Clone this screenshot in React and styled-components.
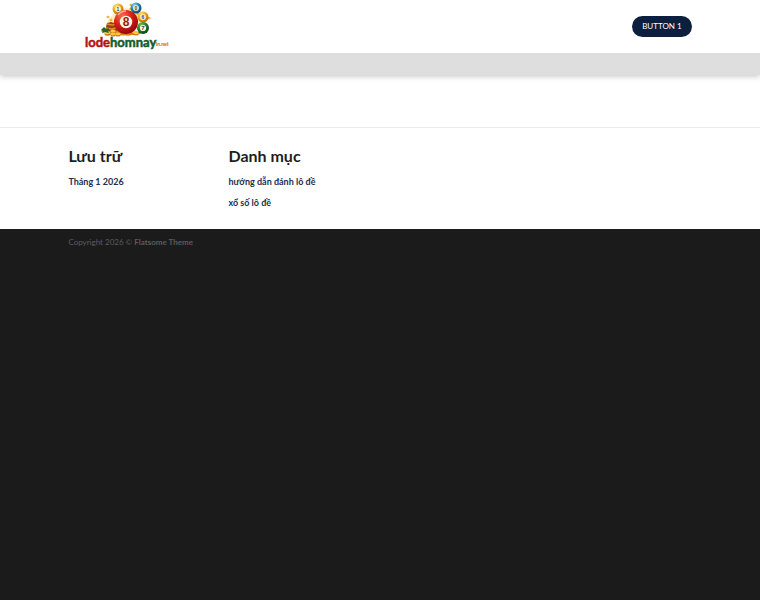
import React from "react";
import styled, { createGlobalStyle } from "styled-components";

const GlobalStyle = createGlobalStyle`
  *, *::before, *::after { box-sizing: border-box; }
  body {
    margin: 0;
    background: #1b1b1b;
    font-family: Lato, "Open Sans", sans-serif;
    color: #1e1e1e;
  }
`;

const Container = styled.div`
  width: 100%;
  max-width: 1080px;
  margin: 0 auto;
  padding: 0 9%;
`;

const Header = styled.header`
  position: relative;
  background: #fff;
  box-shadow: 0 1px 6px rgba(0, 0, 0, 0.25);
`;

const HeaderMain = styled(Container)`
  display: flex;
  align-items: center;
  justify-content: space-between;
  height: 53px;
`;

const LogoLink = styled.a`
  display: block;
  height: 53px;
`;

const HeaderBottom = styled.nav`
  height: 22px;
  background: #dedede;
`;

const PillButton = styled.button`
  height: 21px;
  padding: 0 10px;
  border: 0;
  border-radius: 11px;
  background: #0d1f3f;
  color: #fff;
  font: 400 8px/21px Lato, sans-serif;
  text-transform: uppercase;
  cursor: pointer;
`;

const Main = styled.main`
  height: 52px;
  background: #fff;
`;

const Widgets = styled.section`
  background: #fff;
  border-top: 1px solid #ececec;
  padding: 18px 0 16px;
`;

const WidgetGrid = styled(Container)`
  display: grid;
  grid-template-columns: repeat(4, 1fr);
  column-gap: 17px;
`;

const WidgetTitle = styled.h2`
  margin: 0 0 5px;
  font-size: 16px;
  line-height: 20px;
  font-weight: 700;
  white-space: nowrap;
`;

const LinkList = styled.ul`
  margin: 0;
  padding: 0;
  list-style: none;
`;

const LinkItem = styled.li`
  height: 21px;
  font-size: 9px;
  line-height: 21px;
  white-space: nowrap;
`;

const WidgetLink = styled.a`
  color: #1c2f52;
  font-weight: 700;
  text-decoration: none;
`;

const Footer = styled.footer`
  padding: 5px 0;
  background: #1b1b1b;
  color: #5c5c5c;
  font-size: 8px;
  line-height: 16px;
`;

function Ball({ cx, cy, r, color, digit, size }) {
  return (
    <g>
      <circle cx={cx} cy={cy} r={r} fill={`url(#${color})`} />
      <circle cx={cx} cy={cy} r={r * 0.52} fill="#fff6df" />
      <text
        x={cx}
        y={cy + size * 0.36}
        textAnchor="middle"
        fontFamily="Liberation Sans, sans-serif"
        fontWeight="700"
        fontSize={size}
        fill={color === "red" ? "#a51414" : "#344044"}
      >
        {digit}
      </text>
    </g>
  );
}

const gradients = [
  ["red", "#ff6a50", "#d71d18", "#8d0808"],
  ["gold", "#ffe36b", "#f2a51c", "#bd6208"],
  ["blue", "#8bd6f2", "#2380b5", "#0c446e"],
  ["green", "#78bd55", "#217b32", "#09451a"],
];

const coins = [
  [104, 31], [108, 34], [113, 32], [118, 35], [123, 32],
  [107, 34], [113, 35], [128, 34], [134, 33], [136, 34], [120, 31],
];

const sparks = [
  [131, 9], [134, 12], [129, 14], [138, 14], [118, 13], [108, 17], [131, 5], [149, 18], [111, 20],
];

function Logo() {
  return (
    <svg width="120" height="53" viewBox="68 0 120 53" role="img" aria-label="lodehomnay">
      <defs>
        {gradients.map(([id, light, mid, dark]) => (
          <radialGradient key={id} id={id} cx="0.35" cy="0.25" r="0.8">
            <stop offset="0" stopColor={light} />
            <stop offset="0.5" stopColor={mid} />
            <stop offset="1" stopColor={dark} />
          </radialGradient>
        ))}
      </defs>
      <path d="M107 23Q115 7 132 8Q143 9 148 19L140 28L111 30Z" fill="#ffe59a" opacity="0.65" />
      {sparks.map(([x, y]) => (
        <path key={`${x}-${y}`} d={`M${x - 2} ${y}l2-1.5 2 1.5-2 1.5z`} fill="#f2b62f" />
      ))}
      <path d="M107 23l4-1 7 2 2 7-7 3-8-3z" fill="#9a3f12" />
      <path d="M107 24l5 1 6-1M106 28l6 1 7-2" stroke="#e58b27" strokeWidth="1.5" fill="none" />
      <ellipse cx="123" cy="33" rx="18" ry="2.5" fill="#d98918" />
      {coins.map(([x, y]) => (
        <g key={`${x}-${y}`}>
          <ellipse cx={x} cy={y} rx="2.6" ry="1.6" fill="#c56e0c" />
          <ellipse cx={x} cy={y - 1} rx="2.6" ry="1.4" fill="#ffc63c" />
        </g>
      ))}
      <path d="M102 29l2-2 2 2 3-1-1 3 1 2-4-1-3 1 1-2-2-1z" fill="#1f692a" />
      <Ball cx={118} cy={9} r={5.5} color="gold" digit="1" size={5} />
      <Ball cx={136} cy={8} r={5.5} color="blue" digit="0" size={5} />
      <Ball cx={143} cy={17} r={5.5} color="gold" digit="6" size={5} />
      <Ball cx={126} cy={22} r={12} color="red" digit="8" size={12} />
      <path d="M118 15q3-4 8-4" fill="none" stroke="#ffad92" strokeWidth="1.5" />
      <Ball cx={143} cy={28} r={6} color="green" digit="7" size={6} />
      <g fontFamily="Lato, sans-serif" fontWeight="700">
        <text x="85" y="47" fontSize="13" fill="#b01512" stroke="#b01512" strokeWidth="0.5">
          lode<tspan fill="#155c2b" stroke="#155c2b">homnay</tspan>
        </text>
        <text x="156" y="46" fontSize="5" fill="#e9822b" stroke="#e9822b" strokeWidth="0.2">in.net</text>
      </g>
    </svg>
  );
}

const widgets = [
  { title: "Lưu trữ", links: ["Tháng 1 2026"] },
  { title: "Danh mục", links: ["hướng dẫn đánh lô đề", "xổ số lô đề"] },
];

export default function App() {
  return (
    <>
      <GlobalStyle />
      <Header>
        <HeaderMain>
          <LogoLink href="#"><Logo /></LogoLink>
          <PillButton type="button">Button 1</PillButton>
        </HeaderMain>
        <HeaderBottom />
      </Header>
      <Main />
      <Widgets>
        <WidgetGrid>
          {widgets.map(({ title, links }) => (
            <div key={title}>
              <WidgetTitle>{title}</WidgetTitle>
              <LinkList>
                {links.map((label) => (
                  <LinkItem key={label}>
                    <WidgetLink href="#">{label}</WidgetLink>
                  </LinkItem>
                ))}
              </LinkList>
            </div>
          ))}
        </WidgetGrid>
      </Widgets>
      <Footer>
        <Container>
          Copyright 2026 © <strong>Flatsome Theme</strong>
        </Container>
      </Footer>
    </>
  );
}
